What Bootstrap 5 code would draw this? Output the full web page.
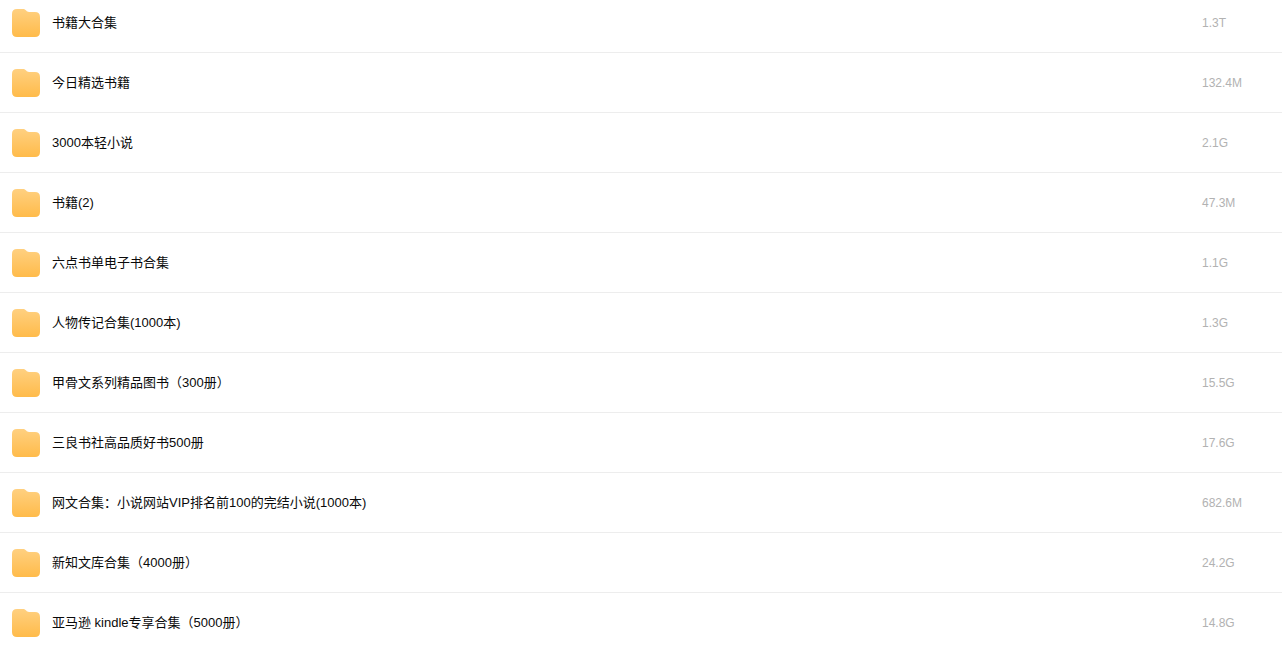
<!DOCTYPE html>
<html lang="zh-CN">
<head>
<meta charset="utf-8">
<meta name="viewport" content="width=device-width, initial-scale=1">
<title>书籍大合集</title>
<link href="https://cdn.jsdelivr.net/npm/bootstrap@5.3.0/dist/css/bootstrap.min.css" rel="stylesheet">
<style>
body { font-family: "Liberation Sans", "Noto Sans CJK SC", sans-serif; background: #fff; }
.file-row { gap: 12px; padding: 16px 0 15px 12px; border-bottom: 1px solid #ededed; }
.file-row:first-child { padding-top: 9px; }
.folder-icon { width: 28px; height: 28px; }
.file-name { font-size: 13px; line-height: 20px; color: #0a0a0a; }
.file-size { width: 80px; font-size: 12px; line-height: 20px; color: #b2b2b2; }
</style>
</head>
<body>
<svg class="position-absolute" width="0" height="0" aria-hidden="true">
  <defs>
    <linearGradient id="folder-fill" x1="0" y1="0" x2="0" y2="1">
      <stop offset="0" stop-color="#ffd080"/>
      <stop offset="1" stop-color="#ffbb4a"/>
    </linearGradient>
  </defs>
</svg>
<main class="vh-100 overflow-hidden">
  <ul class="list-unstyled mb-0" id="files"></ul>
</main>
<template id="row">
  <li class="file-row d-flex align-items-center">
    <svg class="folder-icon flex-shrink-0" viewBox="0 0 28 28" aria-hidden="true"><path fill="url(#folder-fill)" d="M5 0H11C12.500 0 13.300.6 14.200 1.600C15 2.600 15.800 3 17 3H23C26.300 3 28 4.700 28 8V23C28 26.300 26.300 28 23 28H5C1.700 28 0 26.300 0 23V5C0 1.700 1.700 0 5 0Z"/></svg>
    <a class="file-name flex-grow-1 text-truncate text-decoration-none" href="#"></a>
    <span class="file-size flex-shrink-0"></span>
  </li>
</template>
<script src="https://cdn.jsdelivr.net/npm/bootstrap@5.3.0/dist/js/bootstrap.bundle.min.js"></script>
<script>
const files = [
  ["书籍大合集", "1.3T"],
  ["今日精选书籍", "132.4M"],
  ["3000本轻小说", "2.1G"],
  ["书籍(2)", "47.3M"],
  ["六点书单电子书合集", "1.1G"],
  ["人物传记合集(1000本)", "1.3G"],
  ["甲骨文系列精品图书（300册）", "15.5G"],
  ["三良书社高品质好书500册", "17.6G"],
  ["网文合集：小说网站VIP排名前100的完结小说(1000本)", "682.6M"],
  ["新知文库合集（4000册）", "24.2G"],
  ["亚马逊 kindle专享合集（5000册）", "14.8G"]
];
const list = document.getElementById("files");
for (const [name, size] of files) {
  const row = document.getElementById("row").content.cloneNode(true);
  row.querySelector(".file-name").textContent = name;
  row.querySelector(".file-size").textContent = size;
  list.append(row);
}
</script>
</body>
</html>
